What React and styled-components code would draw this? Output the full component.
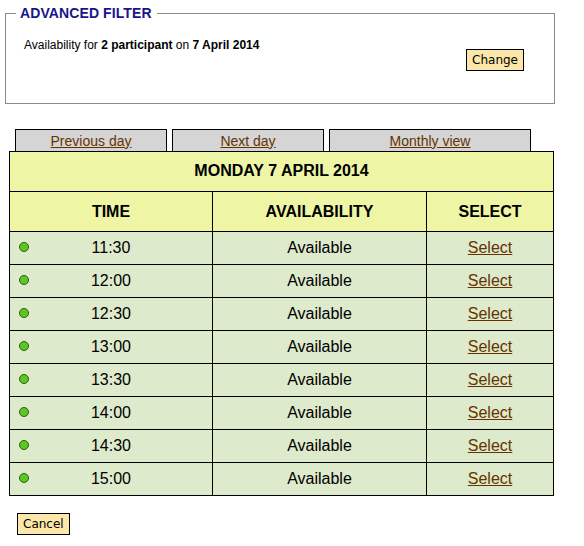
import React from "react";
import styled, { createGlobalStyle } from "styled-components";

const Global = createGlobalStyle`
  html, body { margin: 0; padding: 0; background: #fff; }
  body { font-family: "Liberation Sans", Arial, sans-serif; color: #000; }
`;

const Page = styled.div`
  width: 584px;
  padding-top: 5px;
`;

const Filter = styled.fieldset`
  box-sizing: border-box;
  width: 550px;
  height: 99px;
  margin: 0 0 0 5px;
  padding: 0 0 0 10px;
  border: 1px solid #8a8a8a;
`;

const Legend = styled.legend`
  padding: 0 5px 0 4px;
  font-size: 14px;
  font-weight: bold;
  color: #16168a;
  line-height: 16px;
  letter-spacing: 0.1px;
`;

const FilterBody = styled.div`
  display: flex;
  flex-direction: column;
  padding: 17px 30px 0 8px;
`;

const Summary = styled.div`
  font-size: 12px;
  line-height: 14px;
  b { font-weight: bold; }
`;

const ButtonRow = styled.div`
  display: flex;
  justify-content: flex-end;
  margin-top: -3px;
`;

const Button = styled.button`
  font-family: "DejaVu Sans", "Liberation Sans", sans-serif;
  font-size: 12px;
  height: 22px;
  padding: 0 5px;
  background: #fae7a9;
  border: 1px solid #000;
  border-radius: 0;
  color: #000;
  line-height: 18px;
  cursor: pointer;
`;

const Tabs = styled.div`
  display: flex;
  gap: 5px;
  margin: 25px 0 0 15px;
`;

const Tab = styled.a`
  box-sizing: border-box;
  width: ${(p) => p.$w}px;
  height: 22px;
  display: flex;
  align-items: center;
  justify-content: center;
  background: #d5d5d5;
  border: 1px solid #000;
  border-bottom: none;
  font-size: 14px;
  color: #663300;
  text-decoration: underline;
`;

const Table = styled.table`
  margin-left: 9px;
  width: 545px;
  border-collapse: collapse;
  table-layout: fixed;
  td, th { border: 1px solid #000; padding: 0; }
`;

const TitleCell = styled.th`
  height: 37px;
  padding-bottom: 2px !important;
  background: #eef5a5;
  font-size: 16px;
  font-weight: bold;
  text-align: center;
`;

const HeadCell = styled.th`
  height: 39px;
  background: #eef5a5;
  font-size: 16px;
  font-weight: bold;
  text-align: center;
`;

const Cell = styled.td`
  height: 32px;
  background: #ddeacb;
  font-size: 16px;
  text-align: center;
  vertical-align: middle;
`;

const TimeBox = styled.div`
  display: grid;
  grid-template-columns: 20px 1fr 20px;
  height: 32px;
  align-items: center;
`;

const Dot = styled.span`
  box-sizing: border-box;
  align-self: start;
  margin: 10px 0 0 9px;
  width: 10px;
  height: 10px;
  border-radius: 50%;
  background: #5cc722;
  border: 1px solid #2f5d13;
`;

const SelectLink = styled.a`
  color: #663300;
  text-decoration: underline;
`;

const Footer = styled.div`
  margin: 17px 0 0 17px;
`;

const times = ["11:30", "12:00", "12:30", "13:00", "13:30", "14:00", "14:30", "15:00"];

export default function App() {
  return (
    <Page>
      <Global />
      <Filter>
        <Legend>ADVANCED FILTER</Legend>
        <FilterBody>
          <Summary>
            Availability for <b>2 participant</b> on <b>7 April 2014</b>
          </Summary>
          <ButtonRow>
            <Button>Change</Button>
          </ButtonRow>
        </FilterBody>
      </Filter>
      <Tabs>
        <Tab $w={152}>Previous day</Tab>
        <Tab $w={152}>Next day</Tab>
        <Tab $w={202}>Monthly view</Tab>
      </Tabs>
      <Table>
        <colgroup>
          <col style={{ width: 203 }} />
          <col style={{ width: 214 }} />
          <col style={{ width: 127 }} />
        </colgroup>
        <thead>
          <tr>
            <TitleCell colSpan={3}>MONDAY 7 APRIL 2014</TitleCell>
          </tr>
          <tr>
            <HeadCell>TIME</HeadCell>
            <HeadCell>AVAILABILITY</HeadCell>
            <HeadCell>SELECT</HeadCell>
          </tr>
        </thead>
        <tbody>
          {times.map((t) => (
            <tr key={t}>
              <Cell>
                <TimeBox>
                  <Dot />
                  <span>{t}</span>
                  <span />
                </TimeBox>
              </Cell>
              <Cell>Available</Cell>
              <Cell>
                <SelectLink>Select</SelectLink>
              </Cell>
            </tr>
          ))}
        </tbody>
      </Table>
      <Footer>
        <Button>Cancel</Button>
      </Footer>
    </Page>
  );
}
